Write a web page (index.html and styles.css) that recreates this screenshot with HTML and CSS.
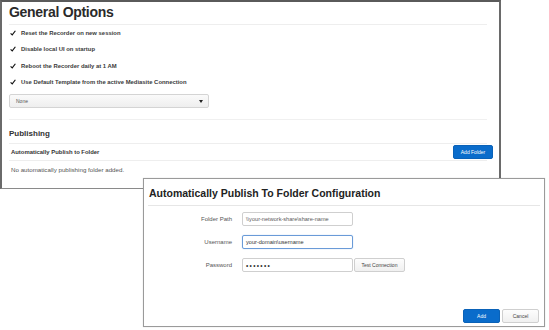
FILE: index.html
```html
<!DOCTYPE html>
<html>
<head>
<meta charset="utf-8">
<link rel="stylesheet" href="styles.css">
</head>
<body>
<div class="stage">
  <div class="panel">
    <h1 class="title">General Options</h1>
    <ul class="checks">
      <li><svg class="tick" viewBox="0 0 8 8"><path d="M0.8 4.4 L3 6.6 L7.2 1" fill="none" stroke="#111" stroke-width="1.5"/></svg>Reset the Recorder on new session</li>
      <li><svg class="tick" viewBox="0 0 8 8"><path d="M0.8 4.4 L3 6.6 L7.2 1" fill="none" stroke="#111" stroke-width="1.5"/></svg>Disable local UI on startup</li>
      <li><svg class="tick" viewBox="0 0 8 8"><path d="M0.8 4.4 L3 6.6 L7.2 1" fill="none" stroke="#111" stroke-width="1.5"/></svg>Reboot the Recorder daily at 1 AM</li>
      <li><svg class="tick" viewBox="0 0 8 8"><path d="M0.8 4.4 L3 6.6 L7.2 1" fill="none" stroke="#111" stroke-width="1.5"/></svg>Use Default Template from the active Mediasite Connection</li>
    </ul>
    <div class="select"><span>None</span><span class="caret"></span></div>
    <div class="sep"></div>
    <h2 class="sub">Publishing</h2>
    <div class="row head"><span>Automatically Publish to Folder</span><button class="btn primary small">Add Folder</button></div>
    <div class="row empty">No automatically publishing folder added.</div>
  </div>

  <div class="dialog">
    <h3 class="dtitle">Automatically Publish To Folder Configuration</h3>
    <div class="form">
      <div class="frow"><label>Folder Path</label><div class="input">\\your-network-share\share-name</div></div>
      <div class="frow"><label>Username</label><div class="input focus">your-domain\username</div></div>
      <div class="frow"><label>Password</label><div class="input pw">&#8226;&#8226;&#8226;&#8226;&#8226;&#8226;&#8226;</div><button class="btn plain">Test Connection</button></div>
    </div>
    <div class="foot"><button class="btn primary wide">Add</button><button class="btn plain wide">Cancel</button></div>
  </div>
</div>
</body>
</html>
```

FILE: styles.css
```css
* { box-sizing: border-box; }
html, body { margin: 0; padding: 0; background: #fff; }
body { font-family: "Liberation Sans", Arial, sans-serif; color: #333; }

.stage { position: relative; width: 549px; height: 330px; }

.panel {
  width: 501px;
  height: 189px;
  border-top: 2px solid #5a5a5a;
  border-left: 2px solid #6a6a6a;
  border-right: 2px solid #6a6a6a;
  border-bottom: 1px solid #8a8a8a;
  padding: 0 12px 0 7px;
}

.title {
  margin: 0;
  height: 23px;
  font-size: 14px;
  line-height: 21px;
  font-weight: bold;
  color: #2a2a2a;
  letter-spacing: -0.3px;
  border-bottom: 1px solid #eee;
}

.checks { list-style: none; margin: 0; padding: 0; }
.checks li {
  height: 16.3px;
  display: flex;
  align-items: center;
  font-size: 5.9px;
  font-weight: bold;
  color: #3a3a3a;
}
.tick { width: 6px; height: 6px; margin: 0 5px 0 1px; flex: none; }

.select {
  margin-top: 4px;
  width: 200px;
  height: 14px;
  border: 1px solid #d4d4d4;
  border-radius: 2px;
  background: linear-gradient(#fafafa, #eee);
  display: flex;
  align-items: center;
  justify-content: space-between;
  padding: 0 5px 0 6px;
  font-size: 5px;
  color: #555;
}
.caret {
  width: 0; height: 0;
  border-left: 2px solid transparent;
  border-right: 2px solid transparent;
  border-top: 3px solid #222;
}

.sep { margin-top: 11px; border-top: 1px solid #f0f0f0; }

.sub {
  margin: 0;
  height: 24px;
  font-size: 8px;
  line-height: 28px;
  font-weight: bold;
  color: #333;
  border-bottom: 1px solid #eee;
}

.row {
  display: flex;
  align-items: center;
  justify-content: space-between;
  padding-left: 2px;
}
.row.head { height: 17px; font-size: 5.9px; font-weight: bold; color: #333; border-bottom: 1px solid #eee; }
.row.empty { height: 17px; font-size: 6.2px; color: #555; }

.btn {
  font-family: "Liberation Sans", Arial, sans-serif;
  font-size: 5px;
  border-radius: 2px;
  padding: 0;
  cursor: default;
}
.btn.primary { background: #0a6ccb; color: #fff; border: 1px solid #0a62b8; }
.btn.small { width: 40px; height: 14px; margin-right: -6px; }
.btn.plain { background: linear-gradient(#fdfdfd, #f0f0f0); color: #444; border: 1px solid #cfcfcf; }

.dialog {
  position: absolute;
  left: 143px;
  top: 178px;
  width: 402px;
  height: 149px;
  background: #fff;
  border: 1px solid #9a9a9a;
  box-shadow: 0 0 1px rgba(0,0,0,0.2);
  padding: 0 4px;
  display: flex;
  flex-direction: column;
}

.dtitle {
  margin: 0;
  height: 27px;
  font-size: 10.5px;
  line-height: 28px;
  font-weight: bold;
  color: #222;
  padding-left: 1px;
  border-bottom: 1px solid #e6e6e6;
}

.form { padding-top: 6px; display: flex; flex-direction: column; gap: 9px; }
.frow { display: flex; align-items: center; height: 14px; }
.frow label {
  width: 84px;
  text-align: right;
  font-size: 6px;
  color: #555;
  margin-right: 10px;
}
.input {
  width: 111px;
  height: 14px;
  border: 1px solid #cfcfcf;
  border-radius: 2px;
  font-size: 5.6px;
  color: #5a5a5a;
  padding: 0 3px;
  display: flex;
  align-items: center;
}
.input.focus { border-color: #6a9bd8; box-shadow: 0 0 1px #8fb6e8; color: #333; }
.input.pw { font-size: 6.5px; color: #333; letter-spacing: 1.3px; }
.frow .btn.plain { width: 51px; height: 14px; margin-left: 1px; font-size: 5px; }

.foot { margin-top: auto; margin-bottom: 3px; display: flex; justify-content: flex-end; gap: 2px; padding-right: 1px; }
.btn.wide { width: 37px; height: 14px; }
```
